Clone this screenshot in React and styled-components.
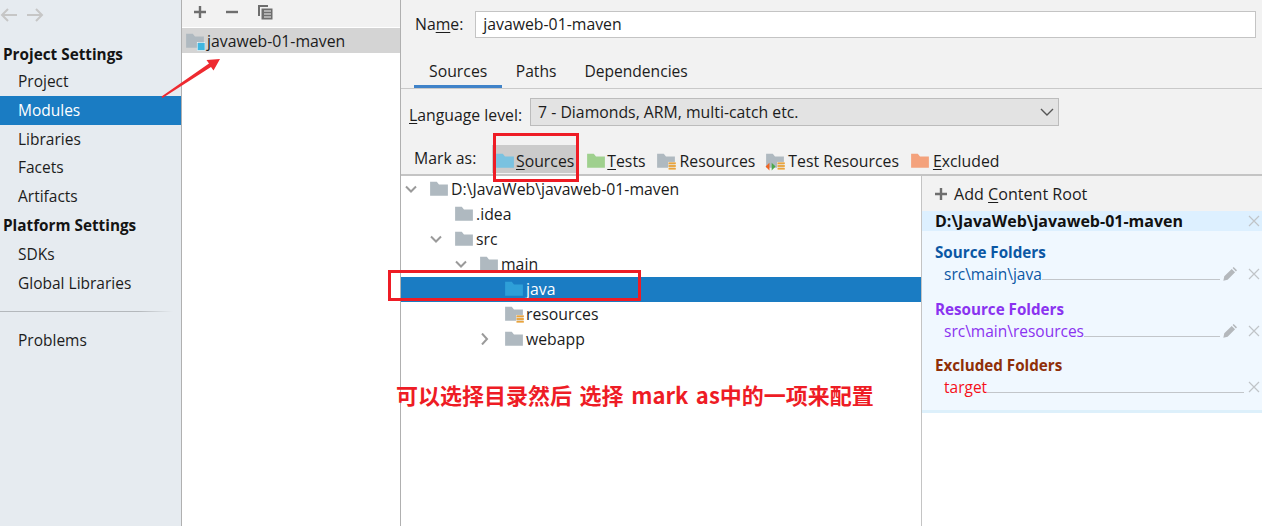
import React from "react";
import styled, { createGlobalStyle } from "styled-components";

const Global = createGlobalStyle`
  html, body {
    margin: 0;
    padding: 0;
    height: 526px;
    overflow: hidden;
    background: #f2f2f2;
  }
  * { box-sizing: border-box; }
`;

const Page = styled.div`
  position: relative;
  width: 1262px;
  height: 526px;
  display: grid;
  grid-template-columns: 182px 219px 1fr;
  font-family: "Open Sans", "Noto Sans", sans-serif;
  font-size: 15.8px;
  color: #1c1c1c;
  overflow: hidden;
`;

const Sidebar = styled.div`
  background: #e6ebf0;
  border-right: 1px solid #b0b0b0;
  display: flex;
  flex-direction: column;
  font-size: 15.5px;
`;

const NavArrows = styled.div`
  height: 40.4px;
  display: flex;
  align-items: center;
  gap: 8px;
  padding: 0 0 11px 0;
  color: #c4c4c4;
`;

const SectionTitle = styled.div`
  height: ${(p) => p.$h}px;
  line-height: ${(p) => p.$lh}px;
  padding-left: 3px;
  font-size: 15.3px;
  font-weight: 700;
  color: #141414;
`;

const NavItem = styled.div`
  height: 28.6px;
  line-height: 29px;
  padding-left: 18px;
  background: ${(p) => (p.$active ? "#1a7cc3" : "transparent")};
  color: ${(p) => (p.$active ? "#ffffff" : "#1c1c1c")};
`;

const NavDivider = styled.div`
  height: 1px;
  margin: 13px 8px 14px 0;
  background: linear-gradient(to right, #b4b8bc 80%, #e6ebf0);
`;

const ModulesPane = styled.div`
  background: #ffffff;
  border-right: 1px solid #b0b0b0;
  display: flex;
  flex-direction: column;
`;

const ModulesToolbar = styled.div`
  height: 28px;
  padding: 0 0 3px 11px;
  background: #f2f2f2;
  border-bottom: 1px solid #fff;
  display: flex;
  align-items: center;
  gap: 18px;
  color: #6e6e6e;
`;

const ModuleRow = styled.div`
  height: 25px;
  padding-left: 3px;
  background: #d4d4d4;
  display: flex;
  align-items: center;
  gap: 2px;
`;

const Main = styled.div`
  display: flex;
  flex-direction: column;
  min-width: 0;
`;

const NameRow = styled.div`
  height: 50px;
  padding: 11px 6px 0 14px;
  display: flex;
  align-items: flex-start;
  gap: 12px;
`;

const Label = styled.span`
  line-height: 27px;
  white-space: nowrap;
  padding-top: ${(p) => p.$drop || 0}px;
`;

const Key = styled.span`
  text-decoration: underline;
  text-underline-offset: 2px;
  text-decoration-thickness: 1px;
`;

const TextInput = styled.div`
  flex: 1;
  height: 27px;
  line-height: 25px;
  padding-left: 7px;
  background: #ffffff;
  border: 1px solid #c4c4c4;
`;

const Tabs = styled.div`
  height: 39px;
  padding-left: 13px;
  display: flex;
  border-bottom: 1px solid #c9c9c9;
`;

const Tab = styled.div`
  height: 38px;
  padding: ${(p) => (p.$active ? "0 15px" : "0 14.5px 0 13.5px")};
  font-size: ${(p) => (p.$active ? 15.8 : 15.6)}px;
  line-height: 42px;
  border-bottom: 3px solid ${(p) => (p.$active ? "#4083c9" : "transparent")};
`;

const LevelRow = styled.div`
  height: 38px;
  padding: 9px 0 0 8px;
  display: flex;
  gap: 8px;
`;

const Select = styled.div`
  width: 529px;
  height: 28px;
  padding: 0 4px 0 7px;
  background: #e3e3e3;
  border: 1px solid #bcbcbc;
  display: flex;
  align-items: center;
  justify-content: space-between;
`;

const MarkRow = styled.div`
  height: 49px;
  padding: 18px 0 0 13px;
  display: flex;
  align-items: flex-start;
  border-bottom: 2px solid #c4c4c4;
`;

const MarkLabel = styled.span`
  line-height: 26px;
  width: 78px;
  flex: none;
`;

const MarkItem = styled.div`
  height: 28px;
  margin-right: ${(p) => p.$gap || 0}px;
  padding: 3px ${(p) => (p.$on ? 3 : 0)}px 0;
  display: flex;
  align-items: center;
  gap: ${(p) => p.$iconGap}px;
  white-space: nowrap;
  background: ${(p) => (p.$on ? "#cbcbcb" : "transparent")};
`;

const Content = styled.div`
  flex: 1;
  display: grid;
  grid-template-columns: 521px 1fr;
  min-height: 0;
`;

const Tree = styled.div`
  background: #ffffff;
  border-right: 1px solid #c4c4c4;
  padding-top: 1px;
`;

const TreeRow = styled.div`
  height: 25px;
  padding: 0 0 2px ${(p) => p.$indent}px;
  display: flex;
  align-items: center;
  gap: 2px;
  background: ${(p) => (p.$selected ? "#1a7cc3" : "transparent")};
  color: ${(p) => (p.$selected ? "#ffffff" : "#1c1c1c")};
`;

const Chevron = styled.span`
  width: 20px;
  height: 16px;
  margin-right: 6px;
  flex: none;
  display: flex;
  align-items: center;
  justify-content: center;
`;

const TreeSpacer = styled.span`
  width: 22px;
  flex: none;
`;

const RootsPane = styled.div`
  background: #ffffff;
  display: flex;
  flex-direction: column;
`;

const AddRoot = styled.div`
  height: 35px;
  padding: 0 0 0 12px;
  background: #f2f2f2;
  display: flex;
  align-items: center;
  gap: 6px;
  font-size: 16.1px;
`;

const RootCard = styled.div`
  height: 202px;
  background: #f0f8ff;
  border-bottom: 3px solid #ddf0fb;
  font-size: 15.5px;
`;

const RootHeader = styled.div`
  height: 20px;
  padding: 0 2px 0 13px;
  background: #ddf0ff;
  display: flex;
  align-items: center;
  justify-content: space-between;
  font-size: 16px;
  font-weight: 700;
  color: #111111;
`;

const FolderGroup = styled.div`
  height: 56.5px;
  padding-top: 10px;
  color: ${(p) => p.$color};
`;

const GroupTitle = styled.div`
  height: 22px;
  line-height: 22px;
  padding-left: 13px;
  font-size: 15.2px;
  font-weight: 700;
  color: ${(p) => p.$color};
`;

const FolderRow = styled.div`
  height: 22px;
  padding: 0 2px 0 22px;
  display: flex;
  align-items: center;
`;

const Leader = styled.span`
  flex: 1;
  height: 1px;
  align-self: flex-end;
  margin: 0 4px 5px 0;
  background: #c2c6ca;
`;

const EditIcon = styled.span`
  width: 14px;
  margin: 0 11px 0 -1px;
  display: flex;
  justify-content: center;
`;

const Annotation = styled.div`
  position: absolute;
  border: 3px solid #ee1c25;
  left: ${(p) => p.$x}px;
  top: ${(p) => p.$y}px;
  width: ${(p) => p.$w}px;
  height: ${(p) => p.$h}px;
`;

const Note = styled.div`
  position: absolute;
  left: 396px;
  top: 379px;
  font-family: "Noto Sans CJK SC", "Liberation Sans", sans-serif;
  font-size: 22px;
  line-height: 30px;
  font-weight: 700;
  word-spacing: 2.6px;
  color: #ee1c25;
  white-space: nowrap;
`;

const ArrowOverlay = styled.svg`
  position: absolute;
  left: 160px;
  top: 56px;
`;

const FOLDER = "M1 2.5h6l2 2.5h8v10H1z";

function Folder({ fill = "#afb9c0", badge }) {
  return (
    <svg width="20" height="20" viewBox="0 0 18 18" style={{ flex: "none" }}>
      <path d={FOLDER} fill={fill} />
      {badge === "module" && <rect x="11" y="10.5" width="7" height="7" fill="#40b6e0" stroke="#fff" strokeWidth="0.5" />}
      {(badge === "res" || badge === "testres") && (
        <g fill="#e8a33d" stroke="#fff" strokeWidth="0.3">
          <rect x="11" y="10" width="7" height="2" />
          <rect x="11" y="12.5" width="7" height="2" />
          <rect x="11" y="15" width="7" height="2" />
        </g>
      )}
      {badge === "testres" && (
        <g>
          <path d="M0.5 14l3.5-3.5v7z" fill="#f26522" />
          <path d="M9.5 14l-3.5-3.5v7z" fill="#4aa84a" />
        </g>
      )}
    </svg>
  );
}

function Cross() {
  return (
    <svg width="12" height="12" viewBox="0 0 12 12" style={{ flex: "none" }}>
      <path d="M1 1l10 10M11 1L1 11" stroke="#c0c4c8" strokeWidth="1.2" fill="none" />
    </svg>
  );
}

function Plus({ color = "#6e6e6e" }) {
  return (
    <svg width="14" height="14" viewBox="0 0 14 14" style={{ flex: "none" }}>
      <path d="M7 1v12M1 7h12" stroke={color} strokeWidth="2.4" fill="none" />
    </svg>
  );
}

function Pencil() {
  return (
    <svg width="14" height="14" viewBox="0 0 13 13">
      <path d="M0.3 12.7l0.9-4 6.9-6.9 3.1 3.1-6.9 6.9zM8.9 1l1-1 3.1 3.1-1 1z" fill="#b4b8bc" />
    </svg>
  );
}

function Caret({ open }) {
  return (
    <svg width="12" height="12" viewBox="0 0 12 12">
      <path d={open ? "M1 3.5l5 5 5-5" : "M2 0.5l5 5.5-5 5.5"} stroke="#9a9a9a" strokeWidth="2" fill="none" />
    </svg>
  );
}

function NavArrow({ flip }) {
  return (
    <svg width="18" height="14" viewBox="0 0 18 14" style={{ transform: flip ? "scaleX(-1)" : "none" }}>
      <path d="M17 7H2M8 1L2 7l6 6" stroke="#c6c6c6" strokeWidth="2" fill="none" />
    </svg>
  );
}

const sections = [
  { title: "Source Folders", color: "#0b57a4", rowColor: "#0b57a4", path: "src\\main\\java", edit: true },
  { title: "Resource Folders", color: "#8a33f0", rowColor: "#8a33f0", path: "src\\main\\resources", edit: true },
  { title: "Excluded Folders", color: "#8f2f08", rowColor: "#f5101a", path: "target", edit: false },
];

export default function App() {
  return (
    <Page>
      <Global />
      <Sidebar>
        <NavArrows>
          <NavArrow />
          <NavArrow flip />
        </NavArrows>
        <SectionTitle $h={27} $lh={29}>Project Settings</SectionTitle>
        <NavItem>Project</NavItem>
        <NavItem $active>Modules</NavItem>
        <NavItem>Libraries</NavItem>
        <NavItem>Facets</NavItem>
        <NavItem>Artifacts</NavItem>
        <SectionTitle $h={30} $lh={31}>Platform Settings</SectionTitle>
        <NavItem>SDKs</NavItem>
        <NavItem>Global Libraries</NavItem>
        <NavDivider />
        <NavItem>Problems</NavItem>
      </Sidebar>

      <ModulesPane>
        <ModulesToolbar>
          <Plus />
          <svg width="14" height="14" viewBox="0 0 14 14"><path d="M1 7h12" stroke="#6e6e6e" strokeWidth="2.4" /></svg>
          <svg width="16" height="16" viewBox="0 0 16 16">
            <path d="M1 1h10v2H3v9H1z" fill="#6e6e6e" />
            <path d="M4.5 4.5h11v11h-11z" fill="#6e6e6e" />
            <path d="M7 7h7M7 10h7M7 13h7" stroke="#f2f2f2" strokeWidth="1" />
          </svg>
        </ModulesToolbar>
        <ModuleRow>
          <Folder badge="module" />
          javaweb-01-maven
        </ModuleRow>
      </ModulesPane>

      <Main>
        <NameRow>
          <Label>Na<Key>m</Key>e:</Label>
          <TextInput>javaweb-01-maven</TextInput>
        </NameRow>
        <Tabs>
          <Tab $active>Sources</Tab>
          <Tab>Paths</Tab>
          <Tab>Dependencies</Tab>
        </Tabs>
        <LevelRow>
          <Label $drop={4}><Key>L</Key>anguage level:</Label>
          <Select>
            7 - Diamonds, ARM, multi-catch etc.
            <svg width="14" height="8" viewBox="0 0 14 8"><path d="M1 1l6 6 6-6" stroke="#555" strokeWidth="1.4" fill="none" /></svg>
          </Select>
        </LevelRow>
        <MarkRow>
          <MarkLabel>Mark as:</MarkLabel>
          <MarkItem $on $gap={9} $iconGap={1}>
            <Folder fill="#7ac2e0" />
            <span><Key>S</Key>ources</span>
          </MarkItem>
          <MarkItem $gap={10} $iconGap={1}>
            <Folder fill="#9fd08e" />
            <span><Key>T</Key>ests</span>
          </MarkItem>
          <MarkItem $gap={10} $iconGap={4}>
            <Folder badge="res" />
            <span>Resources</span>
          </MarkItem>
          <MarkItem $gap={11} $iconGap={3}>
            <Folder badge="testres" />
            <span>Test Resources</span>
          </MarkItem>
          <MarkItem $iconGap={3}>
            <Folder fill="#f4a27c" />
            <span><Key>E</Key>xcluded</span>
          </MarkItem>
        </MarkRow>
        <Content>
          <Tree>
            <TreeRow $indent={0}>
              <Chevron><Caret open /></Chevron>
              <Folder />
              <span>D:\JavaWeb\javaweb-01-maven</span>
            </TreeRow>
            <TreeRow $indent={29}>
              <TreeSpacer />
              <Folder />
              <span>.idea</span>
            </TreeRow>
            <TreeRow $indent={25}>
              <Chevron><Caret open /></Chevron>
              <Folder />
              <span>src</span>
            </TreeRow>
            <TreeRow $indent={50}>
              <Chevron><Caret open /></Chevron>
              <Folder />
              <span>main</span>
            </TreeRow>
            <TreeRow $indent={79} $selected>
              <TreeSpacer />
              <Folder fill="#2e9fd8" />
              <span>java</span>
            </TreeRow>
            <TreeRow $indent={79}>
              <TreeSpacer />
              <Folder badge="res" />
              <span>resources</span>
            </TreeRow>
            <TreeRow $indent={75}>
              <Chevron><Caret /></Chevron>
              <Folder />
              <span>webapp</span>
            </TreeRow>
          </Tree>
          <RootsPane>
            <AddRoot>
              <Plus />
              <span>Add <Key>C</Key>ontent Root</span>
            </AddRoot>
            <RootCard>
              <RootHeader>
                D:\JavaWeb\javaweb-01-maven
                <Cross />
              </RootHeader>
              {sections.map((s) => (
                <FolderGroup key={s.title} $color={s.rowColor}>
                  <GroupTitle $color={s.color}>{s.title}</GroupTitle>
                  <FolderRow>
                    <span>{s.path}</span>
                    <Leader />
                    {s.edit && <EditIcon><Pencil /></EditIcon>}
                    <Cross />
                  </FolderRow>
                </FolderGroup>
              ))}
            </RootCard>
          </RootsPane>
        </Content>
      </Main>

      <ArrowOverlay width="64" height="44" viewBox="0 0 64 44">
        <path d="M1.5 40.5L49 7.5L46.5 4L60 3L53.5 14.5L51 11L2.5 42Z" fill="#ee2a30" />
      </ArrowOverlay>
      <Annotation $x={493} $y={133} $w={86} $h={49} />
      <Annotation $x={388} $y={270} $w={253} $h={31} />
      <Note>可以选择目录然后 选择 mark as中的一项来配置</Note>
    </Page>
  );
}
